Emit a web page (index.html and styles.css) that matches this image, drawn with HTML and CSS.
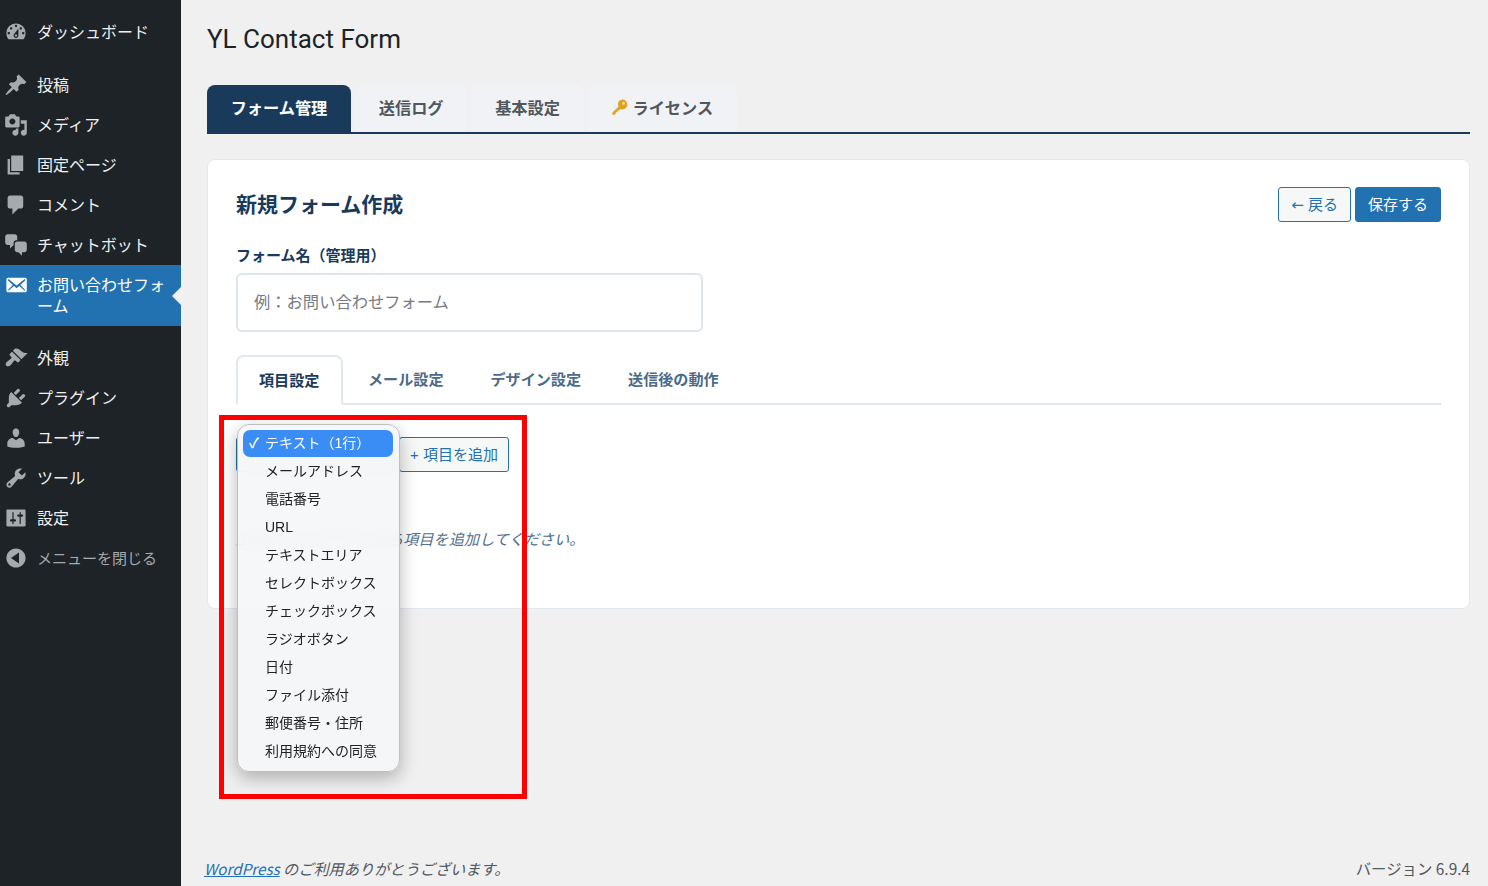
FILE: index.html
```html
<!DOCTYPE html>
<html lang="ja">
<head>
<meta charset="utf-8">
<title>YL Contact Form</title>
<link rel="stylesheet" href="styles.css">
</head>
<body>
<aside class="sidebar">
  <nav class="menu">
    <a class="menu-item"><svg class="mi" viewBox="0 0 20 20"><path d="M3.76 16h12.48c1.1-1.37 1.76-3.11 1.76-5 0-4.42-3.58-8-8-8s-8 3.58-8 8c0 1.89.66 3.63 1.76 5zM10 4c.55 0 1 .45 1 1s-.45 1-1 1-1-.45-1-1 .45-1 1-1zM6 6c.55 0 1 .45 1 1s-.45 1-1 1-1-.45-1-1 .45-1 1-1zm8 0c.55 0 1 .45 1 1s-.45 1-1 1-1-.45-1-1 .45-1 1-1zm-5.37 5.55L12 7v6c0 1.1-.9 2-2 2s-2-.9-2-2c0-.57.24-1.08.63-1.45zM4 10c.55 0 1 .45 1 1s-.45 1-1 1-1-.45-1-1 .45-1 1-1zm12 0c.55 0 1 .45 1 1s-.45 1-1 1-1-.45-1-1 .45-1 1-1zm-5 3c0-.55-.45-1-1-1s-1 .45-1 1 .45 1 1 1 1-.45 1-1z"/></svg><span>ダッシュボード</span></a>
    <div class="menu-sep"></div>
    <a class="menu-item"><svg class="mi" viewBox="0 0 20 20"><path d="M10.44 3.02l1.82-1.82 6.36 6.35-1.83 1.82c-1.05-.68-2.48-.57-3.41.36l-.75.75c-.92.93-1.04 2.35-.35 3.41l-1.83 1.82-2.41-2.41-2.8 2.79c-.42.42-3.38 2.71-3.8 2.29s1.86-3.39 2.28-3.81l2.79-2.79L4.1 9.36l1.83-1.82c1.05.69 2.48.57 3.4-.36l.75-.75c.93-.92 1.05-2.35.36-3.41z"/></svg><span>投稿</span></a>
    <a class="menu-item"><svg class="mi" viewBox="0 0 20 20"><path d="M13 11V4c0-.55-.45-1-1-1h-1.67L9 1H5L3.67 3H2c-.55 0-1 .45-1 1v7c0 .55.45 1 1 1h10c.55 0 1-.45 1-1zM7 4.5c1.38 0 2.5 1.12 2.5 2.5S8.38 9.5 7 9.5 4.5 8.38 4.5 7 5.62 4.5 7 4.5zM14 6h5v10.5c0 1.38-1.12 2.5-2.5 2.5S14 17.88 14 16.5s1.12-2.5 2.5-2.5c.17 0 .34.02.5.05V9h-3V6zm-4 8.05V13h2v3.5c0 1.38-1.12 2.5-2.5 2.5S7 17.88 7 16.5 8.12 14 9.5 14c.17 0 .34.02.5.05z"/></svg><span>メディア</span></a>
    <a class="menu-item"><svg class="mi" viewBox="0 0 20 20"><path d="M6 15V2h10v13H6zm-1 1h8v2H3V5h2v11z"/></svg><span>固定ページ</span></a>
    <a class="menu-item"><svg class="mi" viewBox="0 0 20 20"><path d="M5 2h9c1.1 0 2 .9 2 2v7c0 1.1-.9 2-2 2h-2l-5 5v-5H5c-1.1 0-2-.9-2-2V4c0-1.1.9-2 2-2z"/></svg><span>コメント</span></a>
    <a class="menu-item"><svg class="mi" viewBox="0 0 20 20"><path d="M11 6h-.82C9.07 6 8 7.2 8 8.16V10l-3 3v-3H3c-1.1 0-2-.9-2-2V3c0-1.1.9-2 2-2h6c1.1 0 2 .9 2 2v3zm0 1h6c1.1 0 2 .9 2 2v5c0 1.1-.9 2-2 2h-2v3l-3-3h-1c-1.1 0-2-.9-2-2V9c0-1.1.9-2 2-2z"/></svg><span>チャットボット</span></a>
    <a class="menu-item is-current"><svg class="mi" viewBox="0 0 20 20"><path d="M19 14.5v-9c0-.83-.67-1.5-1.5-1.5H3.49c-.83 0-1.5.67-1.5 1.5v9c0 .83.67 1.5 1.5 1.5H17.5c.83 0 1.5-.67 1.5-1.5zm-1.31-9.11c.33.33.15.67-.03.84L13.6 9.95l3.9 4.06c.12.14.2.36.06.51-.13.16-.43.15-.56.05l-4.37-3.73-2.14 1.95-2.13-1.95-4.37 3.73c-.13.1-.43.11-.56-.05-.14-.15-.06-.37.06-.51l3.9-4.06-4.06-3.72c-.18-.17-.36-.51-.03-.84s.67-.17.95.07l6.24 5.04 6.25-5.04c.28-.24.62-.4.95-.07z"/></svg><span>お問い合わせフォーム</span></a>
    <div class="menu-sep"></div>
    <a class="menu-item"><svg class="mi" viewBox="0 0 20 20"><path d="M14.48 11.06L7.41 3.99l1.5-1.5c.5-.56 2.3-.47 3.51.32 1.21.8 1.43 1.28 2.91 2.1 1.18.64 2.45 1.26 4.45.85zm-.71.71L6.7 4.7 4.93 6.47c-.39.39-.39 1.02 0 1.41l1.06 1.06c.39.39.39 1.03 0 1.42-.6.6-1.43 1.11-2.21 1.69-.35.26-.7.53-1.01.84C1.43 13.71.96 15.42 1.91 16.37c.95.95 2.66.47 3.98-.84.31-.31.58-.66.84-1.01.58-.78 1.09-1.61 1.69-2.21.39-.39 1.02-.39 1.41 0l1.06 1.06c.39.39 1.02.39 1.41 0z"/></svg><span>外観</span></a>
    <a class="menu-item"><svg class="mi" viewBox="0 0 20 20"><path d="M13.11 4.36L9.87 7.6 8 5.73l3.24-3.24c.35-.34 1.05-.2 1.56.32.52.51.66 1.21.31 1.55zm-8 1.77l.91-1.12 9.01 9.01-1.19.84c-.71.71-2.63 1.16-3.82 1.16H6.14L4.9 17.26c-.59.59-1.54.59-2.12 0-.59-.58-.59-1.53 0-2.12l1.24-1.24v-3.88c0-1.13.4-3.19 1.09-3.89zm7.26 3.97l3.24-3.24c.34-.35 1.04-.21 1.55.31.52.51.66 1.21.31 1.55l-3.24 3.25z"/></svg><span>プラグイン</span></a>
    <a class="menu-item"><svg class="mi" viewBox="0 0 20 20"><path d="M10 9.25c-2.27 0-2.73-3.44-2.73-3.44C7 4.02 7.82 2 9.97 2c2.16 0 2.98 2.02 2.71 3.81 0 0-.41 3.44-2.68 3.44zm0 2.57L12.72 10c2.39 0 4.52 2.33 4.52 4.53v2.49s-3.65 1.13-7.24 1.13c-3.65 0-7.24-1.13-7.24-1.13v-2.49c0-2.25 1.94-4.48 4.47-4.48z"/></svg><span>ユーザー</span></a>
    <a class="menu-item"><svg class="mi" viewBox="0 0 20 20"><path d="M16.68 9.77c-1.34 1.34-3.3 1.67-4.95.99l-5.41 6.52c-.99.99-2.59.99-3.58 0s-.99-2.59 0-3.57l6.52-5.42c-.68-1.65-.35-3.61.99-4.95 1.28-1.28 3.12-1.62 4.72-1.06l-2.89 2.89 2.82 2.82 2.86-2.87c.53 1.58.18 3.39-1.08 4.65zM3.81 16.21c.4.39 1.04.39 1.43 0 .4-.4.4-1.04 0-1.44-.39-.39-1.03-.39-1.43 0-.39.4-.39 1.04 0 1.44z"/></svg><span>ツール</span></a>
    <a class="menu-item"><svg class="mi" viewBox="0 0 20 20"><path d="M18 16V4c0-.55-.45-1-1-1H3c-.55 0-1 .45-1 1v12c0 .55.45 1 1 1h14c.55 0 1-.45 1-1zM8 11h1c.55 0 1 .45 1 1s-.45 1-1 1H8v1.5c0 .28-.22.5-.5.5s-.5-.22-.5-.5V13H6c-.55 0-1-.45-1-1s.45-1 1-1h1V5.500c0-.28.22-.5.5-.5s.5.22.5.5V11zm5-2h-1c-.55 0-1-.45-1-1s.45-1 1-1h1V5.500c0-.28.22-.5.5-.5s.5.22.5.5V7h1c.55 0 1 .45 1 1s-.45 1-1 1h-1v5.500c0 .28-.22.5-.5.5s-.5-.22-.5-.5V9z"/></svg><span>設定</span></a>
    <a class="menu-item is-collapse"><svg class="mi" viewBox="0 0 20 20"><path fill-rule="evenodd" d="M10 2c-4.42 0-8 3.58-8 8s3.58 8 8 8 8-3.58 8-8-3.58-8-8-8zM12.500 14.500 5.800 10l6.700-4.500z"/></svg><span>メニューを閉じる</span></a>
  </nav>
</aside>

<div class="main">
  <h1 class="page-title">YL Contact Form</h1>
  <div class="main-tabs">
    <a class="main-tab is-active">フォーム管理</a>
    <a class="main-tab">送信ログ</a>
    <a class="main-tab">基本設定</a>
    <a class="main-tab"><svg class="key" viewBox="0 0 20 20"><path fill="#e0a020" d="M12.600 1.600a5.600 5.600 0 0 1 0 11.200c-.8 0-1.500-.2-2.200-.5L8.700 14l-1.600.1-.1 1.700-1.700.1-.1 1.600-1.300 1.200L1.500 18.500l.1-2.400 6.700-6.300a5.600 5.600 0 0 1 4.300-8.200z"/><circle cx="14" cy="6" r="1.600" fill="#f7e6a8"/></svg>ライセンス</a>
  </div>

  <section class="card">
    <header class="card-head">
      <h2 class="card-title">新規フォーム作成</h2>
      <div class="actions">
        <button class="btn btn-outline"><span class="arrow">←</span> 戻る</button>
        <button class="btn btn-primary">保存する</button>
      </div>
    </header>
    <label class="field-label">フォーム名（管理用）</label>
    <div class="text-input">例：お問い合わせフォーム</div>

    <div class="sub-tabs">
      <a class="sub-tab is-active">項目設定</a>
      <a class="sub-tab">メール設定</a>
      <a class="sub-tab">デザイン設定</a>
      <a class="sub-tab">送信後の動作</a>
    </div>

    <div class="add-row">
      <div class="select-box"></div>
      <button class="btn btn-outline btn-add">+ 項目を追加</button>
    </div>
    <p class="empty-note">上のドロップダウンから項目を追加してください。</p>
  </section>

  <footer class="foot">
    <span class="thanks"><a class="foot-link">WordPress</a> のご利用ありがとうございます。</span>
    <span class="version">バージョン 6.9.4</span>
  </footer>
</div>

<ul class="dropdown">
  <li class="opt is-selected"><span class="tick">✓</span>テキスト（1行）</li>
  <li class="opt">メールアドレス</li>
  <li class="opt">電話番号</li>
  <li class="opt">URL</li>
  <li class="opt">テキストエリア</li>
  <li class="opt">セレクトボックス</li>
  <li class="opt">チェックボックス</li>
  <li class="opt">ラジオボタン</li>
  <li class="opt">日付</li>
  <li class="opt">ファイル添付</li>
  <li class="opt">郵便番号・住所</li>
  <li class="opt">利用規約への同意</li>
</ul>
<div class="annotation"></div>
</body>
</html>
```

FILE: styles.css
```css
* { box-sizing: border-box; }
html, body { height: 100%; }
body {
  margin: 0;
  height: 886px;
  overflow: hidden;
  display: flex;
  background: #f0f0f1;
  color: #1d2327;
  font-family: "Noto Sans CJK JP", "Noto Sans", sans-serif;
}

/* Sidebar */
.sidebar { width: 181px; flex: none; background: #1d2327; }
.menu { display: flex; flex-direction: column; padding-top: 12px; }
.menu-item {
  display: flex;
  align-items: center;
  min-height: 40px;
  padding: 0 8px 2px 37px;
  position: relative;
  color: #f0f0f1;
  font-size: 16px;
  line-height: 21px;
}
.mi { position: absolute; left: 4px; top: 8px; width: 24px; height: 24px; fill: #a7aaad; }
.menu-sep { height: 13px; }
.menu-item.is-current { background: #2271b1; color: #fff; min-height: 61px; margin-bottom: -1px; }
.is-current .mi { fill: #fff; }
.is-current::after {
  content: "";
  position: absolute;
  right: 0;
  top: 50%;
  margin-top: -9px;
  border: 9px solid transparent;
  border-right-color: #f0f0f1;
  border-left-width: 0;
}
.is-collapse { color: #a7aaad; font-size: 15px; }

/* Main */
.main { flex: 1; min-width: 0; display: flex; flex-direction: column; padding: 0 18px 0 26px; }
.page-title { margin: 20px 0 0; height: 38px; font: 400 26px/38px Roboto, "Noto Sans CJK JP", sans-serif; color: #1d2327; }
.main-tabs { display: flex; gap: 4px; margin-top: 27px; height: 49px; border-bottom: 2px solid #1a3a5c; }
.main-tab {
  display: flex;
  align-items: center;
  justify-content: center;
  height: 47px;
  padding: 0 23.8px 4px;
  background: #f0f2f5;
  border-radius: 8px 8px 0 0;
  color: #50575e;
  font-size: 16.2px;
  font-weight: 700;
}
.main-tab.is-active { background: #1a3a5c; color: #fff; width: 144px; padding: 0 0 4px; }
.key { width: 18px; height: 18px; margin-right: 3px; }

/* Card */
.card {
  position: relative;
  margin-top: 25px;
  width: 1263px;
  height: 450px;
  padding: 27px 28px;
  background: #fff;
  border: 1px solid #e4e9ef;
  border-radius: 8px;
}
.card-head { display: flex; justify-content: space-between; align-items: center; height: 35px; }
.card-title { margin: 0; font-size: 21px; line-height: 33px; padding-bottom: 2px; font-weight: 700; color: #1a3a5c; }
.actions { display: flex; gap: 4px; }
.btn {
  height: 35px;
  padding: 0 12px;
  border-radius: 3px;
  font: 400 15px/33px "Liberation Sans", "Noto Sans CJK JP", sans-serif;
  border: 1px solid #2271b1;
}
.arrow { font-family: "DejaVu Sans", sans-serif; }
.btn-outline { background: #f6f7f7; color: #2271b1; }
.btn-primary { background: #2271b1; color: #fff; }
.field-label { display: block; margin-top: 23px; font-size: 15px; line-height: 20px; font-weight: 700; color: #1a3a5c; }
.text-input {
  width: 467px;
  height: 59px;
  margin-top: 8px;
  padding-left: 16px;
  border: 2px solid #dfe5ec;
  border-radius: 6px;
  font-size: 16.3px;
  line-height: 53px;
  color: #757b82;
}
.sub-tabs { display: flex; margin-top: 23px; height: 50px; border-bottom: 2px solid #e0e7ee; }
.sub-tab {
  height: 48px;
  padding: 0 23.5px;
  font-size: 15.1px;
  line-height: 46px;
  font-weight: 700;
  color: #4d6a88;
}
.sub-tab.is-active {
  height: 50px;
  margin: 0 1.5px 0 0;
  padding: 0 21px;
  width: 107px;
  line-height: 44px;
  border: 2px solid #e0e7ee;
  border-bottom: 2px solid #fff;
  border-radius: 8px 8px 0 0;
  color: #1a3a5c;
  background: #fff;
}
.add-row { display: flex; gap: 4px; margin-top: 32px; height: 35px; }
.select-box {
  width: 159px;
  height: 35px;
  border: 1px solid #2271b1;
  border-radius: 3px;
  background: #f6f7f7;
}
.btn-add { width: 110px; padding: 0; }
.empty-note { margin: 56px 0 0; font-size: 15.2px; line-height: 21px; font-style: italic; color: #50708f; white-space: nowrap; }

/* Footer */
.foot { margin-top: auto; height: 34px; display: flex; justify-content: space-between; font-size: 15.2px; line-height: 32px; color: #50575e; }
.thanks { font-style: italic; margin-left: -3px; }
.version { font-size: 15.4px; }
.foot-link { color: #2271b1; text-decoration: underline; }

/* Native select popup, drawn over the page */
.dropdown {
  position: absolute;
  left: 237px;
  top: 424px;
  width: 163px;
  height: 348px;
  margin: 0;
  padding: 5px;
  list-style: none;
  background: rgba(245, 246, 247, .9);
  -webkit-backdrop-filter: blur(8px);
  backdrop-filter: blur(8px);
  border: 1px solid #bdbfc1;
  border-radius: 12px;
  box-shadow: 0 6px 18px rgba(0, 0, 0, .28);
}
.opt {
  position: relative;
  height: 28px;
  padding-left: 22px;
  font-family: "Liberation Sans", "Noto Sans CJK JP", sans-serif;
  font-size: 14px;
  line-height: 27px;
  color: #222;
  white-space: nowrap;
}
.opt.is-selected { height: 27px; margin-bottom: 1px; width: 150px; background: #3a8df5; border-radius: 7px; color: #fff; }
.tick { position: absolute; left: 6px; top: 0; font-size: 14px; font-weight: 700; }

/* Red annotation rectangle */
.annotation {
  position: absolute;
  left: 219px;
  top: 415px;
  width: 308px;
  height: 384px;
  border: 5px solid #f00;
}
```
